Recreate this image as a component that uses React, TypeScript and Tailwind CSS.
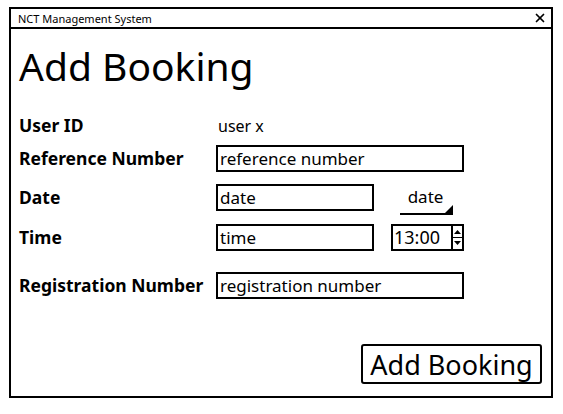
import { X } from 'lucide-react';

const font = { fontFamily: '"Noto Sans", "Open Sans", sans-serif' };

function Field({ label, children, className = '' }: { label: string; children: React.ReactNode; className?: string }) {
  return (
    <div className={`flex items-center h-[27px] ${className}`}>
      <div className="w-[197px] shrink-0 text-[17.5px] font-bold text-black">{label}</div>
      {children}
    </div>
  );
}

function TextBox({ value, width }: { value: string; width: string }) {
  return (
    <div className={`${width} h-[27px] border-2 border-black bg-white flex items-center pl-[2px] text-[17px] text-black`}>
      {value}
    </div>
  );
}

export default function App() {
  return (
    <div className="w-[563px] h-[414px] bg-white pl-[9px] pt-[7px]" style={font}>
      <div className="w-[544px] h-[391px] border-2 border-black flex flex-col">
        {/* title bar */}
        <div className="h-[20px] border-b-2 border-black flex items-center justify-between pl-[7px] pr-[4px]">
          <span className="text-[11px] leading-none text-black">NCT Management System</span>
          <X className="w-[14px] h-[14px] text-black" strokeWidth={3} />
        </div>

        <div className="flex flex-col pl-[8px] pr-[9px]">
          <h1 className="mt-[13px] text-[39px] leading-[48px] text-black">Add Booking</h1>

          <Field label="User ID" className="mt-[22px]">
            <span className="pl-[2px] text-[16px] text-black">user x</span>
          </Field>

          <Field label="Reference Number" className="mt-[6px]">
            <TextBox value="reference number" width="w-[248px]" />
          </Field>

          <Field label="Date" className="mt-[12px]">
            <TextBox value="date" width="w-[158px]" />
            <div className="ml-[24px] w-[55px] h-[27px] relative flex items-center justify-center text-[17px] text-black">
              <span className="-mt-[2px]">date</span>
              <div className="absolute left-[2px] right-0 bottom-[-4px] h-[2px] bg-black" />
              <svg className="absolute right-0 bottom-[-4px]" width="10" height="10" viewBox="0 0 10 10">
                <polygon points="10,0 10,10 0,10" fill="black" />
              </svg>
            </div>
          </Field>

          <Field label="Time" className="mt-[13px]">
            <TextBox value="time" width="w-[158px]" />
            <div className="ml-[17px] w-[73px] h-[27px] border-2 border-black flex">
              <div className="flex-1 flex items-center pl-[1px] text-[18px] text-black">13:00</div>
              <div className="w-[11px] border-l-2 border-black flex flex-col items-center justify-center gap-[5px]">
                <svg width="7" height="4" viewBox="0 0 7 4"><polygon points="3.5,0 7,4 0,4" fill="black" /></svg>
                <div className="w-full h-[1px] bg-black -my-[2px]" />
                <svg width="7" height="4" viewBox="0 0 7 4"><polygon points="0,0 7,0 3.5,4" fill="black" /></svg>
              </div>
            </div>
          </Field>

          <Field label="Registration Number" className="mt-[21px]">
            <TextBox value="registration number" width="w-[248px]" />
          </Field>

          <div className="flex justify-end mt-[45px]">
            <button className="w-[181px] h-[40px] border-2 border-black rounded-[3px] bg-white text-[27px] leading-none text-black">
              Add Booking
            </button>
          </div>
        </div>
      </div>
    </div>
  );
}
